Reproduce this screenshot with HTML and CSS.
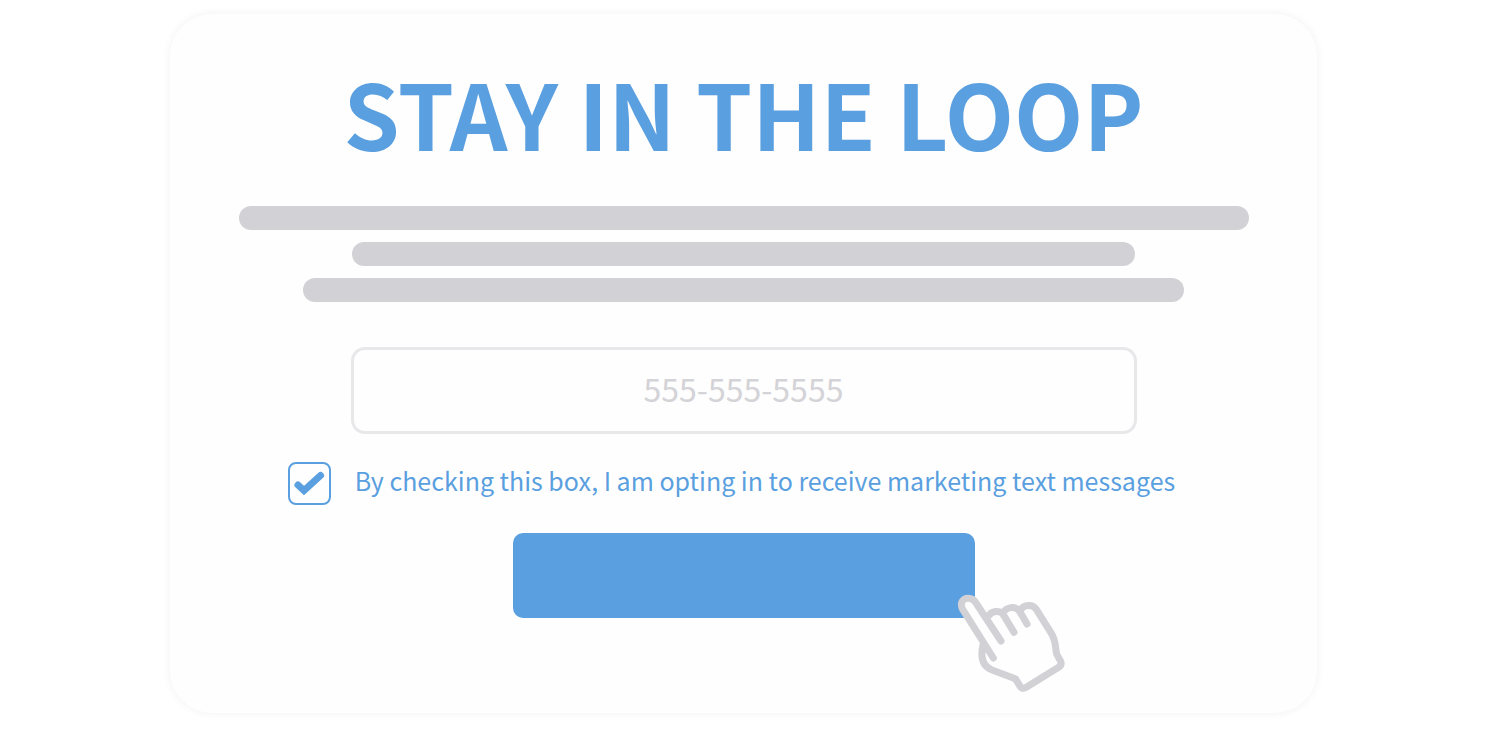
FILE: index.html
```html
<!DOCTYPE html>
<html lang="en">
<head>
    <meta charset="UTF-8">
    <title>Stay in the loop</title>
    <link rel="stylesheet" href="styles.css">
</head>
<body>
    <form class="signup-card">
        <h1 class="signup-title">STAY IN THE LOOP</h1>

        <!-- Placeholder copy -->
        <div class="copy-lines">
            <div class="copy-line long"></div>
            <div class="copy-line short"></div>
            <div class="copy-line medium"></div>
        </div>

        <input class="phone-input" type="tel" placeholder="555-555-5555" aria-label="Phone number">

        <div class="opt-in">
            <span class="check">
                <input class="check-input" type="checkbox" id="opt-in" checked>
                <svg class="check-mark" viewBox="0 0 43 43" aria-hidden="true">
                    <path d="M10 23L16 28.500L32.500 13.500" />
                </svg>
            </span>
            <label class="opt-in-label" for="opt-in">By checking this box, I am opting in to receive marketing text messages</label>
        </div>

        <div class="submit">
            <button class="submit-btn" type="button" aria-label="Sign up"></button>
            <!-- Hand pointer over the button corner -->
            <svg class="hand" viewBox="0 0 420 375" aria-hidden="true">
                <path class="hand-shape" d="M157 234L127 190L62 88C55 68 66 55 82 55C92 55 99 59 105 69L144 106C152 93 174 90 185 101C195 80 222 76 236 94C247 72 274 71 286 88L331 160C346 184 342 202 347 222L359 244C363 253 357 260 348 265L257 321C249 327 242 327 236 317L223 296L151 269C124 257 117 230 127 190Z" />
                <path d="M157 234L65 88C55 68 66 55 82 55C92 55 99 59 105 69L180 183M144 106C152 93 174 90 185 101L219 157M185 101C195 80 222 76 236 94L258 132M236 94C247 72 274 71 286 88L331 160C346 184 342 202 347 222L359 244C363 253 357 260 348 265L257 321C249 327 242 327 236 317L223 296L151 269C124 257 117 230 127 190" />
            </svg>
        </div>
    </form>
</body>
</html>
```
FILE: styles.css
```css
* { box-sizing: border-box; }

body {
    margin: 0;
    padding: 14px 186px 16px 170px;
    background: #fff;
    font-family: "Noto Sans CJK SC", "Noto Sans", sans-serif;
    color: #5a9fdf;
}

.signup-card {
    display: flex;
    flex-direction: column;
    align-items: center;
    padding: 54px 32px 95px;
    border-radius: 42px;
    background: #fefefe;
    box-shadow: 0 0 10px rgba(0, 0, 0, 0.06);
}

.signup-title {
    margin: 0 0 50px;
    font-size: 90px;
    font-weight: 700;
    line-height: 88px;
    white-space: nowrap;
}

/* Grey bars standing in for text */
.copy-lines {
    display: flex;
    flex-direction: column;
    align-items: center;
    gap: 12px;
    width: 100%;
    margin-bottom: 45px;
}
.copy-line { height: 24px; border-radius: 12px; background: #d2d1d6; }
.copy-line.long { width: 100%; max-width: 1010px; }
.copy-line.short { width: 78%; max-width: 783px; }
.copy-line.medium { width: 88%; max-width: 881px; }

.phone-input {
    width: 100%;
    max-width: 786px;
    height: 87px;
    margin-bottom: 28px;
    padding: 0 20px 6px;
    border: 3px solid #e8e7ea;
    border-radius: 14px;
    background: #fefefe;
    font-family: inherit;
    font-size: 32px;
    text-align: center;
    color: #5a9fdf;
}
.phone-input::placeholder { color: #d4d3d7; opacity: 1; }

.opt-in {
    display: flex;
    align-items: center;
    gap: 24px;
    margin-bottom: 28px;
    padding-right: 24px;
}
.check { position: relative; width: 43px; height: 43px; }
.check-input {
    appearance: none;
    display: block;
    width: 43px;
    height: 43px;
    margin: 0;
    border: 2px solid #5a9fdf;
    border-radius: 8px;
    background: #fefefe;
}
.check-mark {
    position: absolute;
    inset: 0;
    fill: none;
    stroke: #5a9fdf;
    stroke-width: 7;
    stroke-linecap: round;
    pointer-events: none;
    visibility: hidden;
}
.check-input:checked + .check-mark { visibility: visible; }
.opt-in-label {
    padding-bottom: 8px;
    font-size: 25px;
    line-height: 34px;
}

.submit { position: relative; width: 100%; max-width: 462px; }
.submit-btn {
    display: block;
    width: 100%;
    height: 85px;
    border: 0;
    border-radius: 10px;
    background: #5a9fdf;
    cursor: pointer;
}
.hand {
    position: absolute;
    top: 47px;
    right: -106px;
    width: 140px;
    height: 125px;
    fill: none;
    stroke: #d2d1d6;
    stroke-width: 21;
    stroke-linecap: round;
    stroke-linejoin: round;
    pointer-events: none;
}
.hand-shape { fill: #fefefe; stroke: none; }
```
